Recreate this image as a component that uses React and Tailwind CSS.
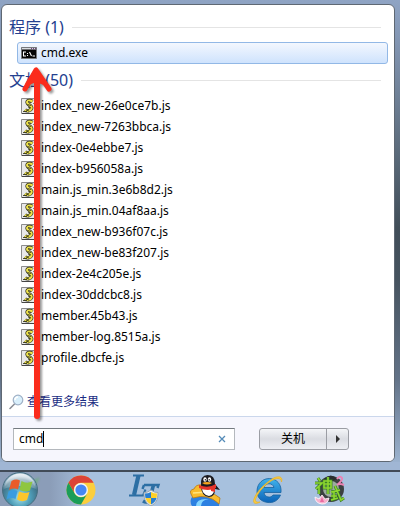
import React, { useState } from "react";

const files = [
  "index_new-26e0ce7b.js",
  "index_new-7263bbca.js",
  "index-0e4ebbe7.js",
  "index-b956058a.js",
  "main.js_min.3e6b8d2.js",
  "main.js_min.04af8aa.js",
  "index_new-b936f07c.js",
  "index_new-be83f207.js",
  "index-2e4c205e.js",
  "index-30ddcbc8.js",
  "member.45b43.js",
  "member-log.8515a.js",
  "profile.dbcfe.js",
];

function ScriptIcon() {
  return (
    <svg viewBox="0 0 16 16" className="size-4 shrink-0" aria-hidden="true">
      <path d="M.5.5h15v15H.5z" fill="#e9e9e9" stroke="#8b8b8b" />
      <path d="M15.500 1v14.500H1" fill="none" stroke="#444" />
      <path d="M11.500 3.500C8.500 1.500 5 3 6.500 5.200S11.500 8 10.500 10.500 6 13.500 4 11.800" fill="none" stroke="#33331c" strokeWidth="3.600" />
      <path d="M11.500 3.500C8.500 1.500 5 3 6.500 5.200S11.500 8 10.500 10.500 6 13.500 4 11.800" fill="none" stroke="#eee24a" strokeWidth="2.200" />
      <path d="M7 3.500l3 1M6.500 6.500l3.500 1M7 9l3 1M5 12l3 1M12.500 5l1.500 2M2 13.500h4" stroke="#39391b" strokeWidth=".9" />
    </svg>
  );
}

function CmdIcon() {
  return (
    <svg viewBox="0 0 16 16" className="size-4 shrink-0" aria-hidden="true">
      <path d="M.5 2.500h15v11H.5z" fill="#050505" stroke="#77797c" />
      <path d="M1 3h14v1.500H1z" fill="#d9dce0" />
      <path d="M10 3.700h1M12 3.700h1M14 3.700h1" stroke="#526" />
      <path d="M5 7H2.500v4H5M6.500 8v1M6.500 10v1M8.500 7l2 4M11.500 11h2.500" fill="none" stroke="#fff" strokeWidth="1.100" />
    </svg>
  );
}

function SearchIcon() {
  return (
    <svg viewBox="0 0 16 16" className="size-4 shrink-0" aria-hidden="true">
      <path d="M1 14.500l4.500-4.500" stroke="#8c8f96" strokeWidth="1.600" strokeLinecap="round" />
      <circle cx="9" cy="6" r="4.800" fill="#d9effb" stroke="#9fb0c6" strokeWidth="1.200" />
      <path d="M6 6c0-2 1.500-3 3-3" fill="none" stroke="#fff" strokeWidth="1.500" />
    </svg>
  );
}

function StartIcon() {
  return (
    <svg viewBox="0 0 40 36" className="h-9 w-10" aria-hidden="true">
      <defs>
        <radialGradient id="orb" cx="50%" cy="70%" r="60%">
          <stop offset="0" stopColor="#a5e4ee" />
          <stop offset=".5" stopColor="#4e9db8" />
          <stop offset=".85" stopColor="#41748a" />
          <stop offset="1" stopColor="#8eb0c4" />
        </radialGradient>
        <linearGradient id="gloss" x2="0" y2="1">
          <stop offset="0" stopColor="#fff" stopOpacity=".85" />
          <stop offset="1" stopColor="#fff" stopOpacity=".15" />
        </linearGradient>
        <filter id="glow">
          <feGaussianBlur stdDeviation="1" />
        </filter>
      </defs>
      <path d="M31 9l8-4-5 10z" fill="#63b66c" opacity=".6" filter="url(#glow)" />
      <circle cx="19" cy="18" r="17.500" fill="url(#orb)" stroke="#486f80" />
      <path d="M3 17C4 7 11 1.500 19 1.500S34 7 35 17c-9-4-23-4-32 0z" fill="url(#gloss)" />
      <path d="M10.500 9q4.500-2.500 8.500-.5l-2 9q-4-2-9 .5z" fill="#e95b29" />
      <path d="M20.500 9q5 3 11 .5l-2.500 9q-5 2-10.500-.5z" fill="#8fc640" />
      <path d="M7.500 19.500q4.500-2.500 9-.5l-2 8q-4.500-2-9 .5z" fill="#3a9ce0" />
      <path d="M18 19.500q5 2.500 10.500.5l-2.500 8q-5 2.500-10-.5z" fill="#fcc62c" />
    </svg>
  );
}

function ChromeIcon() {
  return (
    <svg viewBox="0 0 30 30" className="size-[30px]" aria-hidden="true">
      <circle cx="15" cy="15" r="14.500" fill="#fbce3d" />
      <path d="M2.440 7.750A14.500 14.500 0 0 1 27.600 7.750H15A7.250 7.250 0 0 0 8.700 18.600z" fill="#dc4437" />
      <path d="M2.440 7.750A14.500 14.500 0 0 0 15 29.500l6.300-10.900A7.250 7.250 0 0 1 8.700 18.600z" fill="#1b9d58" />
      <circle cx="15" cy="15" r="7" fill="#f5f5f5" />
      <circle cx="15" cy="15" r="5.600" fill="#4687f4" />
    </svg>
  );
}

function LogoIcon() {
  return (
    <svg viewBox="0 0 34 34" className="size-[34px]" aria-hidden="true">
      <g fill="none" stroke="#2d6fa4">
        <path d="M11.500 2.500L7 22" strokeWidth="4.200" />
        <path d="M6 2.500h11M2 22.500h14l2.500-6" strokeWidth="2" />
        <path d="M17 12h14.500l-1 3M17 12l-1.500 4" strokeWidth="2.400" />
        <path d="M26.500 12L23 25q-2 6-7 3" strokeWidth="3.600" />
      </g>
      <path d="M24 17q-4 3-7 2.500C17 27 19 30 24 33c5-3 7-6 7-13.500q-3 .5-7-2.500z" fill="#e8edf0" stroke="#9aa6ae" />
      <path d="M24 19v6h-5.500q-.5-2-.5-4.500 3 0 6-1.500zM24 25h5.500q-1 4-5.500 6.500z" fill="#2a7fd0" />
      <path d="M24 19q3 1.500 6 1.500 0 2.500-.5 4.500H24zM18.500 25H24v6.500q-4.500-2.500-5.500-6.500z" fill="#ffd026" />
    </svg>
  );
}

function PenguinIcon() {
  return (
    <svg viewBox="0 0 34 32" className="h-8 w-[34px]" aria-hidden="true">
      <path d="M3 23q13-7 24 0 4 4 3 9H3Q0 27 3 23z" fill="#2c80e2" />
      <path d="M7 32q0-8 13-7-8 1-8 7z" fill="#85d5ff" />
      <path d="M2 20q-2-4 3-5 2-5 8-4 8 7 18 13l-1 6Q19 19 4 24z" fill="#f8bc2d" stroke="#b77a15" strokeWidth=".8" />
      <path d="M4 19q8-1 13 0" fill="none" stroke="#ffe580" strokeWidth="1.500" />
      <path d="M12 12q-1-11 6.500-11Q26 1 26 10l5 6-5-1q0 8-6 8-8-1-8-11z" fill="#1b1b20" />
      <path d="M13 13q6 3 12 0 1 8-5 9-7-1-7-9z" fill="#fff" />
      <path d="M10 11q9 4 17-1v4q-8 4-17 0z" fill="#e6352b" />
      <path d="M22 13l4 0v5l-4-1z" fill="#e6352b" />
      <ellipse cx="16" cy="5.500" rx="1.700" ry="2.200" fill="#fff" />
      <ellipse cx="20.500" cy="5.500" rx="1.700" ry="2.200" fill="#fff" />
      <path d="M16.300 5v1.500M20.200 5v1.500" stroke="#111" />
      <path d="M13 9q5-2 10 0-5 3-10 0z" fill="#f7a51d" />
    </svg>
  );
}

function ExplorerIcon() {
  return (
    <svg viewBox="0 0 32 32" className="size-8" aria-hidden="true">
      <defs>
        <linearGradient id="ie" x2="0" y2="1">
          <stop offset="0" stopColor="#42b4ec" />
          <stop offset="1" stopColor="#0b63b8" />
        </linearGradient>
      </defs>
      <path d="M29 18.500H12c.5 5 7 6 9 2.500h7.500C26 27 21 29 16 28.500 9 28 4.500 23 5 16.500 5.500 9 11 4.500 17.500 4.500c7.500.5 12.300 6 11.500 14zM12 13.500h10c-1-5-9-5-10 0z" fill="url(#ie)" stroke="#1762a0" strokeWidth=".8" />
      <path d="M29.500 8c2-6-4-7-11-2C10 12 4 19 2 25c-1.500 4 1 6 6 3C3 29 3 26 4 24 7 17 13 11 19 7c5-3 10-4 10.500 1z" fill="#f9cb3e" stroke="#e9b024" strokeWidth=".7" />
    </svg>
  );
}

function GameIcon() {
  return (
    <svg viewBox="0 0 32 32" className="size-8" aria-hidden="true">
      <circle cx="18" cy="15" r="10.500" fill="#9cab9f" stroke="#3c4041" strokeWidth="5" />
      <path d="M11 5q7-7 13 0-6 4-13 0z" fill="#292d2e" />
      <g fill="none" stroke="#3a7f26" strokeWidth="3">
        <path d="M5 4l2 3M2 9h7L3 15M6 12v8M11 7h7v7h-7zM11 10h7M15 3v17M18 18l9-2M22 12l6 14 3-2M18 22h6M21 18v7M18 26l7-2" />
      </g>
      <g fill="none" stroke="#8ed631" strokeWidth="1.600">
        <path d="M5 4l2 3M2 9h7L3 15M6 12v8M11 7h7v7h-7zM11 10h7M15 3v17M18 18l9-2M22 12l6 14 3-2M18 22h6M21 18v7M18 26l7-2" />
      </g>
      <path d="M24 5q3-4 5-1 1 2-5 7 3-2 7 0" fill="none" stroke="#ea83b4" strokeWidth="2" />
      <path d="M9 30Q2 29 2 23l4 2 3-4 3 4 4-1q-1 6-7 6z" fill="#f6b0cd" stroke="#fff" strokeWidth=".8" />
      <path d="M7 28l2-5 2 5z" fill="#e96ba2" />
    </svg>
  );
}

const tasks = [
  ["Start", StartIcon, "w-[42px]"],
  ["Chrome", ChromeIcon, "w-[78px]"],
  ["LJ", LogoIcon, "w-[48px]"],
  ["QQ", PenguinIcon, "w-[76px]"],
  ["Internet Explorer", ExplorerIcon, "w-[48px]"],
  ["Game", GameIcon, "w-[74px]"],
];

function Heading({ children }) {
  return (
    <h2 className="flex h-6 items-center gap-2 pr-[7px] text-base leading-6 text-[#24408f]">
      {children}
      <span className="h-px flex-1 bg-[#e4e4e4]" />
    </h2>
  );
}

export default function App() {
  const [query, setQuery] = useState("cmd");
  return (
    <div className="flex min-h-screen flex-col bg-[linear-gradient(#8fa4c4,#8396b3_8%,#5f6f80_28%,#414e59_45%,#46535f_55%,#637388_75%,#9eb5d2_92%)] font-['Noto_Sans','Noto_Sans_CJK_SC',sans-serif] text-xs text-black">
      <main className="relative mt-1 mr-[5px] ml-px flex flex-1 flex-col overflow-hidden rounded-md border border-[#5f6873] bg-white">
        <section className="flex-1 pt-[10px] pr-[6px] pl-[7px]">
          <Heading>程序 (1)</Heading>
          <button className="mt-[3px] ml-2 flex h-[22px] w-[calc(100%-8px)] items-center gap-1 rounded-[3px] border border-[#92b8e6] bg-linear-to-b from-[#f3f7fe] to-[#cfe3fd] pl-[3px] text-left">
            <CmdIcon />
            cmd.exe
          </button>
          <div className="mt-1">
            <Heading>文档 (50)</Heading>
          </div>
          <ul className="mt-[3px] pl-3">
            {files.map((name) => (
              <li key={name}>
                <button className="flex h-[21px] w-full items-center gap-1 text-left">
                  <ScriptIcon />
                  {name}
                </button>
              </li>
            ))}
          </ul>
          <a href="#more" className="mt-6 flex h-5 items-center gap-0.5 text-[#1b2d83]">
            <SearchIcon />
            查看更多结果
          </a>
        </section>
        <footer className="flex h-[45px] items-center gap-6 border-t border-[#cbd7ec] bg-[#f6f6fd] px-[11px]">
          <div className="flex h-[22px] w-[222px] items-center border border-[#b4b8bd] border-t-[#747a80] bg-white pr-2 pl-[5px]">
            <input
              aria-label="搜索"
              value={query}
              onChange={(e) => setQuery(e.target.value)}
              className="field-sizing-content h-4 border-r border-black leading-4 outline-none"
            />
            <button aria-label="清除" onClick={() => setQuery("")} className="ml-auto">
              <svg viewBox="0 0 8 8" className="size-2" aria-hidden="true">
                <path d="M1 1l6 6M7 1L1 7" stroke="#548bb8" strokeWidth="1.300" />
              </svg>
            </button>
          </div>
          <div className="flex h-[22px] overflow-hidden rounded-[3px] border border-[#9b9da4] bg-linear-to-b from-[#f4f5f8] via-[#dadce2] to-[#eeeff4]">
            <button className="w-[67px] border-r border-[#9b9da4]">关机</button>
            <button aria-label="更多选项" className="flex w-[21px] items-center justify-center">
              <svg viewBox="0 0 4 8" className="h-2 w-1" aria-hidden="true">
                <path d="M0 0l4 4-4 4z" fill="#333" />
              </svg>
            </button>
          </div>
        </footer>
        <svg viewBox="0 0 40 360" className="pointer-events-none absolute top-[59px] left-[14px] h-[360px] w-10 drop-shadow-[2px_2px_1px_#0006]" aria-hidden="true">
          <path d="M21 12v340" stroke="#fb2c1c" strokeWidth="6" strokeLinecap="round" />
          <path d="M20 6L9 25M20 6l13 19" stroke="#fb2c1c" strokeWidth="5" strokeLinecap="round" />
          <path d="M20 6L11 22l9-4 10 4z" fill="#fb2c1c" />
        </svg>
      </main>
      <div className="h-2 bg-[#a0b6d4]" />
      <nav className="flex h-9 items-start overflow-hidden border-t-2 border-[#414b57] bg-[linear-gradient(90deg,#8b9db8,#8b9db8_50px,#a7c1de_90px)]">
        {tasks.map(([label, Icon, width]) => (
          <button key={label} aria-label={label} className={width + " flex h-9 shrink-0 items-center justify-center"}>
            <Icon />
          </button>
        ))}
      </nav>
    </div>
  );
}
